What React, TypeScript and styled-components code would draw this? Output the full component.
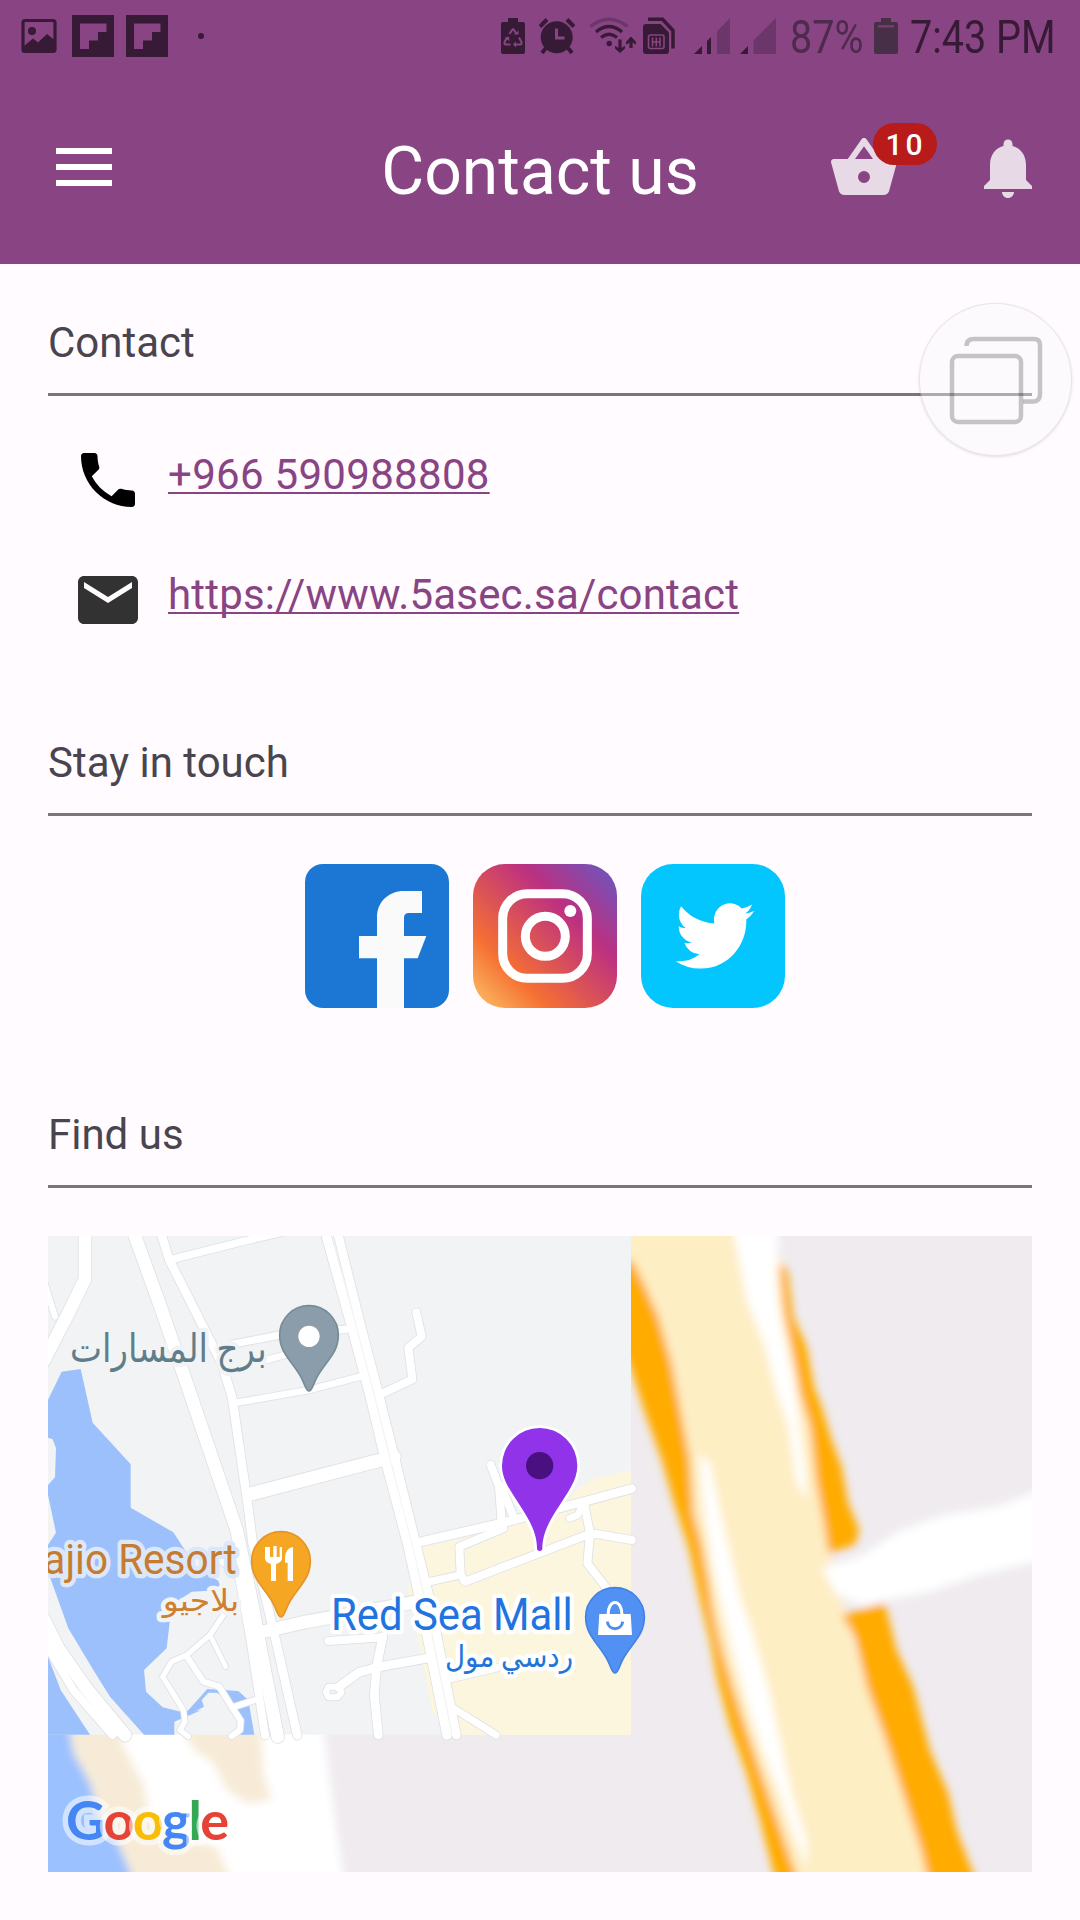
import React from "react";
import styled, { createGlobalStyle } from "styled-components";

const purple = "#884483";
const ink = "#371a35";
const faded = "#6b3669";

const GlobalStyle = createGlobalStyle`
  * { box-sizing: border-box; }
  body { margin: 0; background: #fffbff; }
  svg { display: block; flex: none; }
`;

const Screen = styled.div`
  position: relative;
  width: 1080px;
  height: 1920px;
  overflow: hidden;
  background: #fffbff;
  font-family: Roboto, "Liberation Sans", sans-serif;
  color: #49454f;
`;

const StatusBar = styled.div`
  display: flex;
  justify-content: space-between;
  align-items: center;
  height: 72px;
  padding: 0 26px 0 21px;
  background: ${purple};
`;

const StatusGroup = styled.div`
  display: flex;
  align-items: center;
  height: 72px;
`;

const Slot = styled.div<{ $before: number }>`
  flex: none;
  margin-left: ${(p) => p.$before}px;
`;

const StatusText = styled.div<{ $width: number; $before: number; $color: string }>`
  flex: none;
  width: ${(p) => p.$width}px;
  margin-left: ${(p) => p.$before}px;
  padding-top: 2px;
  color: ${(p) => p.$color};
  font-size: 46px;
  line-height: 70px;
  white-space: nowrap;
  transform: scaleX(0.86);
  transform-origin: left center;
`;

const AppBar = styled.header`
  display: grid;
  grid-template-columns: 1fr auto 1fr;
  align-items: center;
  height: 192px;
  padding: 0 36px 0 56px;
  background: ${purple};
`;

const MenuButton = styled.button`
  display: flex;
  flex-direction: column;
  gap: 10px;
  width: 56px;
  margin-top: -2px;
  padding: 0;
  border: 0;
  background: none;
`;

const MenuBar = styled.span`
  height: 6px;
  background: #fff;
`;

const Title = styled.h1`
  margin: 0 0 0 -20px;
  padding-top: 7px;
  color: #fff;
  font-size: 66px;
  font-weight: 400;
  line-height: 80px;
`;

const Actions = styled.div`
  display: flex;
  justify-content: flex-end;
  gap: 72px;
`;

const ActionButton = styled.button`
  position: relative;
  width: 72px;
  height: 72px;
  padding: 0;
  border: 0;
  background: none;
`;

const Badge = styled.span`
  position: absolute;
  top: -9px;
  left: 45px;
  width: 64px;
  height: 42px;
  padding-left: 1px;
  border-radius: 21px;
  background: #b91a1a;
  color: #fff;
  font: 500 30px/43px Roboto, sans-serif;
  letter-spacing: 3px;
  text-align: center;
`;

const Content = styled.main`
  display: flex;
  flex-direction: column;
  gap: 97px;
  padding: 49px 48px 0;
`;

const Section = styled.section`
  display: flex;
  flex-direction: column;
  gap: 48px;
`;

const SectionTitle = styled.h2`
  margin: 0;
  padding-bottom: 20px;
  border-bottom: 3px solid #7f747b;
  font-size: 42px;
  font-weight: 400;
  line-height: 60px;
`;

const ContactList = styled.div`
  display: flex;
  flex-direction: column;
  gap: 48px;
  padding-left: 24px;
`;

const ContactRow = styled.div`
  display: flex;
  align-items: center;
  gap: 24px;
  height: 72px;
`;

const ContactLink = styled.a<{ $tracking: number }>`
  padding-bottom: 11px;
  color: ${purple};
  font-size: 42px;
  line-height: 60px;
  letter-spacing: ${(p) => p.$tracking}px;
  text-decoration: underline;
  text-decoration-thickness: 2px;
  text-decoration-skip-ink: none;
  text-underline-offset: 3px;
`;

const SocialRow = styled.div`
  display: flex;
  justify-content: center;
  gap: 24px;
  padding-left: 10px;
`;

const MapPanel = styled.div`
  position: relative;
  width: 984px;
  height: 636px;
  overflow: hidden;
  background: #efebef;
`;

const MapBrand = styled.div`
  position: absolute;
  left: 18px;
  bottom: 20px;
  display: flex;
  font: 700 54px/64px Lato, sans-serif;
  letter-spacing: -1.8px;
  paint-order: stroke fill;
  -webkit-text-stroke: 11px rgba(255, 255, 255, 0.55);
`;

const BrandLetter = styled.span<{ $color: string }>`
  position: relative;
  color: ${(p) => p.$color};
`;

const FloatingButton = styled.button`
  position: absolute;
  top: 303px;
  left: 919px;
  width: 153px;
  height: 153px;
  padding: 0;
  border: 1px solid rgba(0, 0, 0, 0.09);
  border-radius: 50%;
  background: rgba(250, 250, 252, 0.4);
  box-shadow: 0 1px 3px rgba(0, 0, 0, 0.12);
`;

const PictureIcon = () => (
  <svg width="36" height="36" viewBox="0 0 36 36">
    <rect x="2" y="2.5" width="32" height="31" rx="2" fill="none" stroke={ink} strokeWidth="3.2" />
    <circle cx="11" cy="13" r="4" fill={ink} />
    <path d="M3 28L12 20.500L17 24.500L26 16L34 22.500V34H3Z" fill={ink} />
  </svg>
);

const FlipIcon = () => (
  <svg width="42" height="42" viewBox="0 0 42 42">
    <rect width="42" height="42" fill={ink} />
    <path d="M8 8.500H34.500V17H26V25.500H17V34H8Z" fill={purple} />
  </svg>
);

const SavingBatteryIcon = () => (
  <svg width="24" height="36" viewBox="0 0 24 36">
    <path d="M7 0H17V4H22Q24 4 24 6V34Q24 36 22 36H2Q0 36 0 34V6Q0 4 2 4H7Z" fill={ink} />
    <g fill="none" stroke={purple} strokeWidth="2">
      <path d="M8.500 16L11 12Q12 10.600 13 12L15.500 16" />
      <path d="M18 19.500L20.500 24Q21 26.500 19 26.500H14.500" />
      <path d="M9.500 26.500H5Q3 26.500 3.500 24L6 19.500" />
    </g>
    <path d="M13 16.500H17.500V12.500ZM15 23.500V29.500L12 26.500ZM3.500 20L8 18.500L8.500 23Z" fill={purple} />
  </svg>
);

const AlarmIcon = () => (
  <svg width="36" height="36" viewBox="0 0 36 36">
    <circle cx="17.700" cy="19.300" r="16" fill={ink} />
    <path d="M1 8.500L8 1.500M28 1.500L35 8.500M7 30L3 35M29 30L33 35" stroke={ink} strokeWidth="4" />
    <path d="M17.500 10.500V20H25.500" fill="none" stroke={purple} strokeWidth="3" />
  </svg>
);

const WifiIcon = () => (
  <svg width="48" height="38" viewBox="0 0 48 38">
    <g fill="none" strokeWidth="3.200">
      <path d="M1.500 9.500Q20 -5 38.500 9.500" stroke={faded} />
      <path d="M7 15Q20 4 33 15" stroke={ink} />
      <path d="M12 20.500Q20 14 28 20.500" stroke={ink} />
      <path d="M31 22.500V33M42 22V31" stroke={ink} />
    </g>
    <circle cx="20.200" cy="26.500" r="2.700" fill={ink} />
    <path d="M26.500 29.500L31 32.500L35.500 29.500V31.500L31 35.500L26.500 31.500ZM37.500 25V27L42 24L46.500 27V25L42 20Z" fill={ink} stroke={ink} />
  </svg>
);

const SimIcon = () => (
  <svg width="32" height="38" viewBox="0 0 32 38">
    <path d="M5 2.200H19.500L30 13.500V31.500" fill="none" stroke={ink} strokeWidth="3.500" />
    <path d="M3 7H17.500L26 15.500V34Q26 37 23 37H3Q0 37 0 34V10Q0 7 3 7Z" fill={ink} />
    <rect x="5.500" y="18" width="15.500" height="13.500" rx="2" fill="none" stroke={purple} strokeWidth="1.600" />
    <path d="M9.500 20.500V29.500M13.300 20.500V29.500M17 20.500V29.500M9.500 25H17" stroke={purple} strokeWidth="1.600" />
  </svg>
);

const SignalIcon = ({ bars }: { bars: 1 | 2 }) => (
  <svg width="36" height="36" viewBox="0 0 36 36">
    <path d="M0 36L8 28V36Z" fill={ink} />
    {bars === 2 && <path d="M13 36V23L17 19V36Z" fill={ink} />}
    <path d={bars === 2 ? "M23 36V13.500L36 0V36Z" : "M13.500 36V22.500L36 0V36Z"} fill={faded} />
  </svg>
);

const BatteryIcon = () => (
  <svg width="24" height="36" viewBox="0 0 24 36">
    <path d="M7 0H17V4H22Q24 4 24 6V34Q24 36 22 36H2Q0 36 0 34V6Q0 4 2 4H7Z" fill="#472f47" />
    <path d="M4 8.300H20" stroke="#77406f" strokeWidth="2.200" />
  </svg>
);

const Glyph = ({ d, fill }: { d: string; fill: string }) => (
  <svg width="72" height="72" viewBox="0 0 24 24">
    <path d={d} fill={fill} fillRule="evenodd" />
  </svg>
);

const basketPath =
  "M5.5,21C4.72,21 4.04,20.55 3.71,19.9L1.1,10.44L1,10A1,1 0 0,1 2,9H6.58L11.18,2.43C11.36,2.17 11.66,2 12,2C12.34,2 12.65,2.17 12.83,2.44L17.42,9H22A1,1 0 0,1 23,10L22.96,10.29L20.29,19.9C19.96,20.55 19.28,21 18.5,21H5.5M12,4.74L9,9H15L12,4.74M12,13A2,2 0 0,0 10,15A2,2 0 0,0 12,17A2,2 0 0,0 14,15A2,2 0 0,0 12,13Z";
const bellPath =
  "M12 22c1.1 0 2-.9 2-2h-4c0 1.1.89 2 2 2zm6-6v-5c0-3.07-1.64-5.64-4.5-6.32V4c0-.83-.67-1.5-1.5-1.5s-1.5.67-1.5 1.5v.68C7.63 5.36 6 7.92 6 11v5l-2 2v1h16v-1l-2-2z";
const phonePath =
  "M6.62 10.79c1.44 2.83 3.76 5.14 6.59 6.59l2.2-2.2c.27-.27.67-.36 1.02-.24 1.12.37 2.33.57 3.57.57.55 0 1 .45 1 1V20c0 .55-.45 1-1 1-9.39 0-17-7.61-17-17 0-.55.45-1 1-1h3.5c.55 0 1 .45 1 1 0 1.25.2 2.45.57 3.57.11.35.03.74-.25 1.02l-2.2 2.2z";
const mailPath =
  "M20 4H4c-1.1 0-2 .9-2 2v12c0 1.1.9 2 2 2h16c1.1 0 2-.9 2-2V6c0-1.1-.9-2-2-2zm0 4l-8 5-8-5V6l8 5 8-5v2z";
const birdPath =
  "M23.953 4.57a10 10 0 01-2.825.775 4.958 4.958 0 002.163-2.723c-.951.555-2.005.959-3.127 1.184a4.92 4.92 0 00-8.384 4.482C7.69 8.095 4.067 6.13 1.64 3.162a4.822 4.822 0 00-.666 2.475c0 1.71.87 3.213 2.188 4.096a4.904 4.904 0 01-2.228-.616v.06a4.923 4.923 0 003.946 4.827 4.996 4.996 0 01-2.212.085 4.936 4.936 0 004.604 3.417 9.867 9.867 0 01-6.102 2.105c-.39 0-.779-.023-1.17-.067a13.995 13.995 0 007.557 2.209c9.053 0 13.998-7.496 13.998-13.985 0-.21 0-.42-.015-.63A9.935 9.935 0 0024 4.59z";

const FacebookLogo = () => (
  <svg width="144" height="144" viewBox="45 72 432 432">
    <rect x="45" y="72" width="432" height="432" rx="54" fill="#1b77d3" />
    <path d="M261 504V355H207V288H261V232C261 185 297 153 341 153H396V219H357Q342 219 342 233V288H409L383 355H342V504Z" fill="#fafafa" />
  </svg>
);

const InstagramLogo = () => (
  <svg width="144" height="144" viewBox="549 72 432 432">
    <defs>
      <linearGradient id="insta" x1="0" y1="1" x2="1" y2="0">
        <stop offset="0" stopColor="#fdc468" />
        <stop offset="0.26" stopColor="#f57033" />
        <stop offset="0.665" stopColor="#bc3081" />
        <stop offset="0.96" stopColor="#7054bb" />
      </linearGradient>
    </defs>
    <rect x="549" y="72" width="432" height="432" rx="96" fill="url(#insta)" />
    <g fill="none" stroke="#fff" strokeWidth="27">
      <rect x="638" y="161" width="254" height="254" rx="74" />
      <circle cx="766" cy="289" r="60" />
    </g>
    <circle cx="841" cy="213" r="18" fill="#fff" />
  </svg>
);

const TwitterLogo = () => (
  <svg width="144" height="144" viewBox="1053 72 432 432">
    <rect x="1053" y="72" width="432" height="432" rx="97" fill="#03c6ff" />
    <path transform="translate(1157 167) scale(9.830 10.050)" d={birdPath} fill="#fff" />
  </svg>
);

const WindowsIcon = () => (
  <svg width="151" height="151" viewBox="0 0 151 151" fill="none" stroke="rgba(0,0,0,0.22)" strokeWidth="4.500">
    <rect x="32" y="52" width="69" height="66" rx="6" />
    <path d="M46.500 42Q46.500 35 54 35H114Q120 35 120 41V90Q120 97.500 113 97.500H103" />
  </svg>
);

const streets: { w: number; d: string }[] = [
  { w: 18, d: "M44 190L75 290" },
  { w: 38, d: "M165 40V178L110 290L40 425" },
  { w: 22, d: "M425 118L640 64L760 36" },
  { w: 22, d: "M610 372L750 345L975 325" },
  { w: 20, d: "M690 425L800 395" },
  { w: 20, d: "M610 550L837 510L1020 462" },
  { w: 24, d: "M1159 278L1175 350L1135 383L1147 478L1045 526" },
  { w: 24, d: "M1382 735L1407 800L1415 905M1415 800L1450 890" },
  { w: 20, d: "M1655 862L1642 886L1618 895" },
  { w: 24, d: "M1662 850L1680 940L1672 1030L1730 1105" },
  { w: 24, d: "M1420 925L1288 980L1292 1062L1305 1085L1670 945L1700 942L1805 960" },
  { w: 22, d: "M1185 1088L1290 1065" },
  { w: 26, d: "M1160 968L1420 908L1650 848L1805 806" },
  { w: 24, d: "M895 1263L1060 1252" },
  { w: 26, d: "M1190 1315L1040 1342L985 1358L925 1402" },
  { w: 18, d: "M895 1400H925L935 1417L922 1432H895L888 1417Z" },
  { w: 26, d: "M1058 1250L1040 1340L1033 1425L1045 1545" },
  { w: 24, d: "M1245 1379L1400 1343" },
  { w: 22, d: "M1260 1458L1398 1545" },
  { w: 16, d: "M590 1170L540 1245L470 1305L425 1325L398 1370L460 1470L465 1505L450 1530L475 1550" },
  { w: 14, d: "M540 1245L587 1340" },
  { w: 18, d: "M470 1308L520 1385L568 1400L605 1460L632 1502L630 1530L605 1548M605 1463L690 1435" },
  { w: 24, d: "M40 1260L130 1410L248 1545" },
  { w: 38, d: "M40 1195L85 1285L165 1400L285 1546" },
  { w: 38, d: "M690 1237L830 1205L1000 1175L1160 1145" },
  { w: 40, d: "M662 822L990 736L1092 710" },
  { w: 26, d: "M390 30L418 120L575 430L606 530L653 850L668 970L735 1250L802 1546" },
  { w: 24, d: "M560 1010L625 1060L660 1250L705 1546" },
  { w: 38, d: "M312 40L395 270L620 930L662 1130L700 1330L743 1550" },
  { w: 28, d: "M884 30L965 320L1021 530L1066 720L1135 980L1170 1140L1251 1545" },
  { w: 26, d: "M921 30L993 320L1048 530L1096 720L1160 980L1200 1140L1279 1545" },
];

const smallPin =
  "M-88 0A88 88 0 0 1 88 0C88 56 50 78 24 126C11 150 10 168 0 168C-10 168 -11 150 -24 126C-50 78 -88 56 -88 0Z";

const MapPin = ({ x, y, fill, edge, children }: { x: number; y: number; fill: string; edge: string; children: React.ReactNode }) => (
  <g transform={`translate(${x} ${y})`}>
    <path d={smallPin} fill={fill} stroke={edge} strokeWidth="5" />
    {children}
  </g>
);

const MapLabel = styled.text`
  font-family: Roboto, "Noto Sans", "DejaVu Sans", sans-serif;
  paint-order: stroke fill;
  stroke-width: 26px;
  stroke-linejoin: round;
`;

const MapDrawing = () => (
  <svg width="984" height="636" viewBox="54 48 2952 1908">
    <defs>
      <filter id="soft" x="-10%" y="-10%" width="120%" height="120%">
        <feGaussianBlur stdDeviation="13" />
      </filter>
    </defs>
    <rect x="54" y="48" width="2952" height="1908" fill="#efebef" />
    <g filter="url(#soft)">
      <path d="M1740 -40H2140L2262 130L2310 400L2350 580L2395 820L2400 1010L2440 1160L2530 1460L2630 1741L2730 2040H2290L2200 1750L2110 1440L2050 1250L1970 900L1900 600L1740 150Z" fill="#feeec4" />
      <path d="M2095 -40H2250L2240 200L2258 330L2290 470L2325 750L2330 840L2300 790L2275 620L2235 500L2205 380L2150 240Z" fill="#fff" />
      <path d="M2008 700L2040 730L2065 850L2100 1000L2130 1130L2165 1230L2215 1400L2250 1560L2285 1720L2330 1860V1940L2290 1840L2250 1720L2200 1600L2160 1480L2120 1340L2080 1180L2048 1040L2020 850Z" fill="#fff" />
      <path d="M1740 90L1812 130L1850 210L1885 290L1925 430L1950 560L1980 720L1990 880L2015 970L2035 1080L2050 1180L2076 1290L2105 1390L2140 1500L2180 1620L2232 1770L2290 1940L2325 2040H2265L2230 1956L2190 1800L2150 1660L2100 1520L2060 1370L2042 1270L2008 1130L1975 980L1932 850L1895 720L1845 580L1800 440L1740 300Z" fill="#ffab00" />
      <path d="M2247 130L2272 150L2290 290L2330 380L2352 500L2375 560L2402 650L2435 740L2455 850L2488 930L2475 975L2395 1000L2380 900L2358 780L2340 620L2310 520L2288 400L2260 270Z" fill="#ffab00" />
      <path d="M2435 1185L2565 1150L2600 1290L2650 1400L2700 1590L2755 1720L2780 1830L2860 2040H2710L2670 1880L2625 1740L2560 1540L2510 1400L2475 1250Z" fill="#ffab00" />
      <path d="M2375 1045L2490 1010L2600 935L2740 885L2900 860L3080 790V1010L2850 1065L2700 1115L2500 1155L2420 1125Z" fill="#fff" />
      <path d="M250 1480H875L910 1750L950 2040H250Z" fill="#fff" />
      <path d="M0 1480H260L280 1580L340 1690L360 1790L440 1850L560 1880L630 2040H0Z" fill="#f7ebd7" />
      <path d="M440 1480H690L700 1660L725 1740L650 1750L590 1710L550 1630L490 1590Z" fill="#f7ebd7" />
      <path d="M-20 1480H110L130 1600L180 1690L205 1780L260 1860L335 2040H-20Z" fill="#9bc1ff" />
    </g>
    <rect x="54" y="48" width="1749" height="1496" fill="#f1f3f5" />
    <g fill="#9cc0fb">
      <path d="M54 540L95 455L152 447L188 608L302 733V863L430 937L500 1045L565 1082L574 1110L485 1115L425 1155L410 1285L342 1350L348 1415L398 1462L470 1480L515 1470L433 1505V1544H342L240 1430L190 1350L115 1225L54 1055V975L78 938L54 825V795L75 772L78 685L68 658L54 653Z" />
      <path d="M54 1310L92 1410L180 1544H54Z" />
      <path d="M468 1478L532 1407L625 1413L655 1440L673 1544H625L635 1500L600 1440L560 1418L535 1418L515 1440L522 1460L470 1488Z" />
    </g>
    <path d="M1175 985L1460 915L1615 840Q1650 790 1700 775L1803 750V1544H1285L1270 1490L1208 1480L1170 1280L1130 1095H1200Z" fill="#fdf6df" />
    <g fill="none" strokeLinecap="round" strokeLinejoin="round">
      {streets.map((s) => (
        <path key={s.d} d={s.d} stroke="#dfe1e4" strokeWidth={s.w + 5} />
      ))}
      {streets.map((s) => (
        <path key={s.d} d={s.d} stroke="#fff" strokeWidth={s.w} />
      ))}
      <path d="M902 30L979 320L1034 530L1081 720L1148 980L1185 1140L1265 1535" stroke="#f4f4f4" strokeWidth="3" />
    </g>

    <MapPin x={837} y={345} fill="#8b9caa" edge="#748d98">
      <circle cy="4" r="32" fill="#fff" />
    </MapPin>
    <MapPin x={753} y={1023} fill="#f5a623" edge="#e59429">
      <path d="M-48 -42V-8Q-48 2 -37 6L-30 10V60H-15V10L-8 6Q3 2 3 -8V-42H-4V-12H-13V-45H-23V-12H-33V-42ZM36 -42V60H20V5H12V-12Q14 -38 36 -42Z" fill="#fff" />
    </MapPin>
    <MapPin x={1755} y={1191} fill="#5191f3" edge="#4381e8">
      <path d="M-47 -9H47L51 54H-51Z" fill="#fff" />
      <path d="M-21 -6C-21 -56 21 -56 21 -6" fill="none" stroke="#fff" strokeWidth="9" />
      <path d="M-23 14C-20 42 20 42 23 14" fill="none" stroke="#4f8fec" strokeWidth="9" />
    </MapPin>
    <g transform="translate(1529 737)">
      <path d="M-113 0A113 113 0 0 1 113 0C113 46 82 82 50 134C20 180 8 215 8 248Q8 256 0 256Q-8 256 -8 248C-8 215 -20 180 -50 134C-82 82 -113 46 -113 0Z" fill="#9134e9" stroke="#fff" strokeWidth="16" paintOrder="stroke" />
      <circle r="41" fill="#4b107f" />
    </g>

    <MapLabel x="120" y="425" fontSize="118" fill="#607d8a" stroke="#f1f3f5" textLength="590" lengthAdjust="spacingAndGlyphs">برج المسارات</MapLabel>
    <MapLabel x="40" y="1062" fontSize="130" fill="#c67c30" stroke="#dce8f8" textLength="580" lengthAdjust="spacingAndGlyphs">ajio Resort</MapLabel>
    <MapLabel x="398" y="1172" fontSize="90" fill="#cf7f2d" stroke="#f1f3f5" textLength="230" lengthAdjust="spacingAndGlyphs">بلاجيو</MapLabel>
    <MapLabel x="903" y="1230" fontSize="132" fill="#2173e0" stroke="#fff" textLength="725" lengthAdjust="spacingAndGlyphs">Red Sea Mall</MapLabel>
    <MapLabel x="1245" y="1340" fontSize="90" fill="#2474d8" stroke="#fff" textLength="384" lengthAdjust="spacingAndGlyphs">ردسي مول</MapLabel>
  </svg>
);

const brand: [string, string][] = [
  ["G", "#4486f4"],
  ["o", "#e54335"],
  ["o", "#f9bd05"],
  ["g", "#4486f4"],
  ["l", "#35a853"],
  ["e", "#e54335"],
];

export default function App() {
  return (
    <Screen>
      <GlobalStyle />
      <StatusBar>
        <StatusGroup>
          <Slot $before={0}><PictureIcon /></Slot>
          <Slot $before={15}><FlipIcon /></Slot>
          <Slot $before={12}><FlipIcon /></Slot>
          <Slot $before={30}>
            <svg width="6" height="6" viewBox="0 0 6 6"><circle cx="3" cy="3" r="3" fill={ink} /></svg>
          </Slot>
        </StatusGroup>
        <StatusGroup>
          <Slot $before={0}><SavingBatteryIcon /></Slot>
          <Slot $before={14}><AlarmIcon /></Slot>
          <Slot $before={14}><WifiIcon /></Slot>
          <Slot $before={6}><SimIcon /></Slot>
          <Slot $before={19}><SignalIcon bars={2} /></Slot>
          <Slot $before={10}><SignalIcon bars={1} /></Slot>
          <StatusText $before={14} $width={71} $color="#4d2b4d">87%</StatusText>
          <Slot $before={13}><BatteryIcon /></Slot>
          <StatusText $before={12} $width={144} $color={ink}>7:43 PM</StatusText>
        </StatusGroup>
      </StatusBar>
      <AppBar>
        <MenuButton aria-label="Menu">
          <MenuBar />
          <MenuBar />
          <MenuBar />
        </MenuButton>
        <Title>Contact us</Title>
        <Actions>
          <ActionButton aria-label="Basket">
            <Glyph d={basketPath} fill="#e7dae6" />
            <Badge>10</Badge>
          </ActionButton>
          <ActionButton aria-label="Notifications">
            <Glyph d={bellPath} fill="#e7dae6" />
          </ActionButton>
        </Actions>
      </AppBar>
      <Content>
        <Section>
          <SectionTitle>Contact</SectionTitle>
          <ContactList>
            <ContactRow>
              <Glyph d={phonePath} fill="#000" />
              <ContactLink $tracking={0.3}>+966 590988808</ContactLink>
            </ContactRow>
            <ContactRow>
              <Glyph d={mailPath} fill="#323232" />
              <ContactLink $tracking={0.18}>https://www.5asec.sa/contact</ContactLink>
            </ContactRow>
          </ContactList>
        </Section>
        <Section>
          <SectionTitle>Stay in touch</SectionTitle>
          <SocialRow>
            <FacebookLogo />
            <InstagramLogo />
            <TwitterLogo />
          </SocialRow>
        </Section>
        <Section>
          <SectionTitle>Find us</SectionTitle>
          <MapPanel>
            <MapDrawing />
            <MapBrand>
              {brand.map(([letter, color], i) => (
                <BrandLetter key={i} $color={color}>{letter}</BrandLetter>
              ))}
            </MapBrand>
          </MapPanel>
        </Section>
      </Content>
      <FloatingButton aria-label="Windows">
        <WindowsIcon />
      </FloatingButton>
    </Screen>
  );
}
